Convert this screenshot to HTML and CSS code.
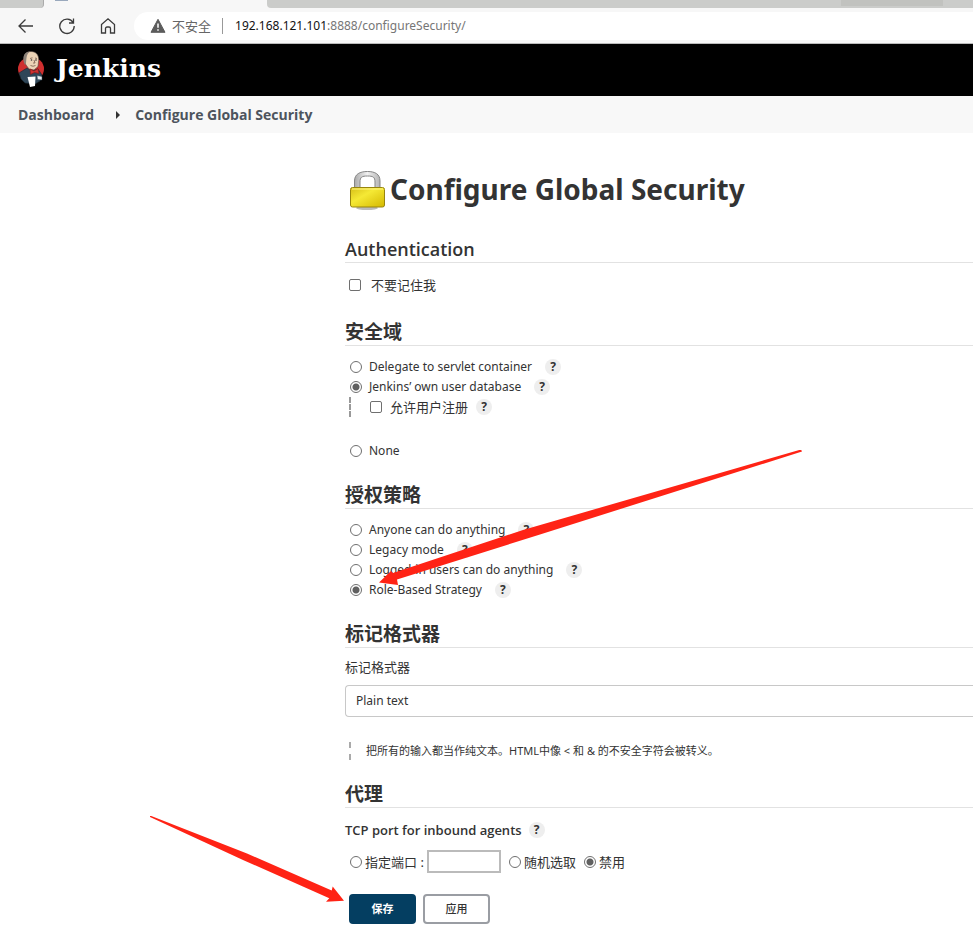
FILE: index.html
```
<!DOCTYPE html>
<html lang="zh-CN">
<head>
<meta charset="utf-8">
<title>Configure Global Security [Jenkins]</title>
<link rel="stylesheet" href="styles.css">
</head>
<body>
<div class="tabstrip"><div class="tab-left"></div><div class="tab-active"><span class="favicon"></span></div><div class="tab-rest"><span class="tab-shade"></span></div></div>
<div class="toolbar">
  <button class="nav-btn" type="button" aria-label="Back"><svg width="18" height="18" viewBox="0 0 18 18"><path d="M16 9H2M8.500 2.500L2 9l6.500 6.500"/></svg></button>
  <button class="nav-btn" type="button" aria-label="Refresh"><svg width="18" height="18" viewBox="0 0 18 18"><path d="M15.200 5.600A7.200 7.200 0 1 0 16.200 9M15.500 1.500v4.500H11"/></svg></button>
  <button class="nav-btn" type="button" aria-label="Home"><svg width="18" height="18" viewBox="0 0 18 18"><path d="M2.500 7.500L9 1.800l6.500 5.700V16h-4v-4.500a1.500 1.500 0 0 0-1.500-1.500H8a1.500 1.500 0 0 0-1.500 1.500V16h-4z"/></svg></button>
  <div class="address">
    <svg width="16" height="16" viewBox="0 0 16 16"><path d="M8 1.300L15 14.300H1z" fill="#5c5c5c" stroke="#5c5c5c" stroke-linejoin="round"/><path d="M8 5.500v4.300M8 11.300v1.500" stroke="#fff" stroke-width="1.500"/></svg>
    <span class="insecure">不安全</span>
    <span class="url"><b>192.168.121.101</b>:8888/configureSecurity/</span>
  </div>
</div>
<header class="masthead">
  <a class="brand" href="#">
    <svg width="28" height="38" viewBox="0 0 28 38">
      <ellipse cx="14" cy="19" rx="13" ry="12" fill="#cf2f2f"/>
      <path d="M2 23l8-5 5 3 6-2 4 6-2 6-5 3-10-1-4-4z" fill="#2f4658" stroke="#17262f" stroke-width=".6"/>
      <path d="M7.500 12C6 5 9 1.500 14 1.500c5.500 0 8 4 7.700 9l-.7 6-4 3.500-5-1-3-4z" fill="#ecd3b6" stroke="#4b403a" stroke-width=".6"/>
      <path d="M7 12.500C5 6 8 1.500 13 1.500 9.500 4 9.500 7 9 13l-1 2z" fill="#8b8178"/>
      <path d="M13 8.500l2.500-.7M18 8l2 .5M13.500 15.500q2.500 1.500 5 0M17 10l1 3h-2" fill="none" stroke="#77594a" stroke-width=".8"/>
      <circle cx="14.500" cy="10" r=".8" fill="#333"/><circle cx="19" cy="10" r=".8" fill="#333"/>
      <path d="M13 19l4 2 4-2.500 1 5-4.500-1-4 2z" fill="#cf2f2f" stroke="#7d1717" stroke-width=".6"/>
      <path d="M10.500 27l8-.5L18 36l-5 1z" fill="#fff"/>
      <path d="M20 25.500l5 1V30l-4.500-.5z" fill="#e6ebee" stroke="#2f4658" stroke-width=".5"/>
    </svg>
    <span class="brand-name">Jenkins</span>
  </a>
</header>
<nav class="crumbs"><a href="#">Dashboard</a><svg width="4" height="8" viewBox="0 0 4 8"><path d="M0 0l4 4-4 4z" fill="#333"/></svg><a href="#">Configure Global Security</a></nav>
<div class="page">
  <main>
    <h1 class="title">
      <svg width="38" height="42" viewBox="0 0 38 42">
        <defs>
          <linearGradient id="gold" x1="0" y1="0" x2="1" y2="1"><stop offset="0" stop-color="#d6be18"/><stop offset=".4" stop-color="#f5e935"/><stop offset="1" stop-color="#d4b800"/></linearGradient>
          <linearGradient id="steel"><stop offset="0" stop-color="#aaa"/><stop offset=".5" stop-color="#f1f1f1"/><stop offset="1" stop-color="#b4b4b4"/></linearGradient>
        </defs>
        <ellipse cx="19" cy="40" rx="11" ry="2" fill="#bbb"/>
        <path d="M6.500 20v-7C6.500 6 12 3.500 19.500 3.500S32 6 32 13v7h-5v-6c0-5-2-6-7.500-6S12 9 12 14v6z" fill="url(#steel)" stroke="#858585"/>
        <rect x="2.500" y="19.500" width="34" height="19.500" rx="2" fill="url(#gold)" stroke="#98850e"/>
        <path d="M4 21h31" stroke="#fff68a"/>
      </svg>
      <span>Configure Global Security</span>
    </h1>
    <form>
      <section>
        <h2 class="latin">Authentication</h2>
        <div class="row tall"><input type="checkbox" id="forget"><label for="forget">不要记住我</label></div>
      </section>
      <section>
        <h2>安全域</h2>
        <div class="row"><input type="radio" name="realm" id="r1"><label for="r1">Delegate to servlet container</label><button class="help" type="button">?</button></div>
        <div class="row"><input type="radio" name="realm" id="r2" checked><label for="r2">Jenkins’ own user database</label><button class="help" type="button">?</button></div>
        <div class="row nested"><input type="checkbox" id="signup"><label for="signup">允许用户注册</label><button class="help" type="button">?</button></div>
        <div class="row"><input type="radio" name="realm" id="r3"><label for="r3">None</label></div>
      </section>
      <section>
        <h2>授权策略</h2>
        <div class="row"><input type="radio" name="auth" id="a1"><label for="a1">Anyone can do anything</label><button class="help" type="button">?</button></div>
        <div class="row"><input type="radio" name="auth" id="a2"><label for="a2">Legacy mode</label><button class="help" type="button">?</button></div>
        <div class="row"><input type="radio" name="auth" id="a3"><label for="a3">Logged-in users can do anything</label><button class="help" type="button">?</button></div>
        <div class="row"><input type="radio" name="auth" id="a4" checked><label for="a4">Role-Based Strategy</label><button class="help" type="button">?</button></div>
      </section>
      <section>
        <h2>标记格式器</h2>
        <label class="field-label" for="markup">标记格式器</label>
        <select id="markup"><option>Plain text</option></select>
        <p class="note">把所有的输入都当作纯文本。HTML中像 &lt; 和 &amp; 的不安全字符会被转义。</p>
      </section>
      <section>
        <h2>代理</h2>
        <div class="port-title"><span>TCP port for inbound agents</span><button class="help" type="button">?</button></div>
        <div class="ports">
          <input type="radio" name="port" id="p1"><label for="p1">指定端口 :</label><input class="port" type="text" aria-label="端口">
          <input type="radio" name="port" id="p2"><label for="p2">随机选取</label>
          <input type="radio" name="port" id="p3" checked><label for="p3">禁用</label>
        </div>
      </section>
      <div class="actions"><button class="btn primary" type="submit">保存</button><button class="btn" type="button">应用</button></div>
    </form>
  </main>
  <svg class="arrow arrow-role" width="424" height="138" viewBox="0 0 424 138"><path d="M422-.5l1 2L161 84.500 18 129.500l1 5.500-19-2.500L12 121l2 2L144 80z"/></svg>
  <svg class="arrow arrow-save" width="196" height="88" viewBox="0 0 196 88"><path d="M0-.5L97 37.500l84.700 37 1-4L194 84.700l-18 1 3.300-3.500L93 44 0 1z"/></svg>
</div>
</body>
</html>
```
FILE: styles.css
```
* { box-sizing: border-box; }
body {
  margin: 0;
  background: #fff;
  color: #333;
  font: 13px/20px "Noto Sans", "Noto Sans CJK SC", sans-serif;
  overflow-x: hidden;
}
button, input, select { font: inherit; color: inherit; margin: 0; }
a { color: inherit; text-decoration: none; }
svg { flex: none; }

.tabstrip { display: flex; height: 8px; background: #f7f7f7; }
.tab-left { width: 44px; background: #cbccca; border-right: 1px solid #aaa; border-bottom-right-radius: 4px; }
.tab-active { width: 223px; padding-left: 11px; }
.favicon { display: block; width: 13px; height: 1px; background: #9aa9bd; }
.tab-rest { flex: 1; background: #cbccca; border-bottom-left-radius: 4px; display: flex; justify-content: flex-end; padding-right: 30px; }
.tab-shade { width: 102px; height: 6px; background: #c1c2bf; }

.toolbar { display: flex; align-items: center; height: 36px; padding-left: 17px; background: #f7f7f7; border-bottom: 1px solid #bbb; }
.nav-btn { display: flex; width: 18px; height: 18px; padding: 0; margin-right: 23px; border: 0; background: none; }
.nav-btn svg { fill: none; stroke: #3b3b3b; stroke-width: 1.3; }
.nav-btn:nth-child(3) { margin-right: 17px; }
.address { flex: 1; display: flex; align-items: center; height: 28px; padding-left: 16px; border-radius: 14px 0 0 14px; background: #fff; }
.insecure { margin-left: 6px; padding-right: 11px; border-right: 1px solid #999; color: #666; line-height: 16px; }
.url { margin-left: 12px; color: #767676; font-size: 12px; }
.url b { color: #111; font-weight: 400; }

.masthead { height: 52px; background: #000; color: #fff; padding: 6px 17px; }
.brand { display: inline-flex; align-items: center; gap: 11px; }
.brand-name { font: bold 25px/36px "DejaVu Serif", Georgia, serif; }
.crumbs { display: flex; align-items: center; height: 37px; padding-left: 18px; background: #f8f8f8; color: #4d545d; font: 700 14px/20px "Open Sans", sans-serif; }
.crumbs svg { margin: 0 15px 0 22px; }

.page { position: relative; display: grid; grid-template-columns: 345px 1fr; }
main { grid-column: 2; padding-top: 35px; }
.title { display: flex; align-items: center; gap: 4px; height: 42px; margin: 0 0 26px; padding-left: 3px; font-size: 28px; line-height: 40px; font-weight: 700; }
section { margin-bottom: 21px; }
h2 { margin: 0 0 11px; height: 27px; border-bottom: 1px solid #e2e2e2; font-size: 19px; line-height: 26px; font-weight: 700; }
h2.latin { font: 600 18px/26px "Open Sans", sans-serif; }

input[type="radio"], input[type="checkbox"] {
  appearance: none;
  flex: none;
  width: 12px;
  height: 12px;
  border: 1px solid #6f6f6f;
  background: #fff;
}
input[type="radio"] { border-radius: 50%; }
input[type="checkbox"] { border-radius: 2px; }
input[type="radio"]:checked { background: radial-gradient(circle, #606060 3px, #fff 4px); }

.row { display: flex; align-items: center; height: 20px; padding-left: 5px; gap: 7px; font-size: 12px; }
.row.tall { height: 24px; padding: 0 0 3px 4px; gap: 10px; font-size: 13px; }
.row.nested { margin: 0 0 24px 4px; padding-left: 19px; gap: 8px; border-left: 2px dashed #999; font-size: 13px; }
.help { width: 16px; height: 16px; padding: 0; border: 0; border-radius: 50%; background: #eee; font-size: 12px; line-height: 16px; font-weight: 700; }
.row .help { margin-left: 6px; }
.row.nested .help { margin-left: 0; }

.field-label { display: block; line-height: 16px; margin-bottom: 10px; }
select { appearance: none; display: block; width: 100%; height: 32px; padding: 0 10px; border: 1px solid #c8c8c8; border-right: 0; border-radius: 4px 0 0 4px; background: #fff; font-size: 12px; }
.note { margin: 25px 0 0 4px; padding-left: 15px; border-left: 2px dashed #aaa; font-size: 11px; line-height: 18px; }
.port-title { display: flex; align-items: center; gap: 7px; height: 22px; margin-bottom: 9px; font: 600 13px/20px "Open Sans", sans-serif; }
.ports { display: flex; align-items: center; gap: 3px; height: 23px; padding-left: 5px; }
.port { width: 74px; height: 23px; border: 2px solid #bbb; background: #fff; }
.ports .port { margin-right: 5px; }
#p3 { margin-left: 5px; }
.actions { display: flex; gap: 7px; padding: 0 0 8px 4px; }
.btn { width: 67px; height: 30px; padding: 0; border: 2px solid #9a9da3; border-radius: 4px; background: #fff; font-size: 11px; font-weight: 500; }
.primary { border-color: #043e61; background: #043e61; color: #fff; font-weight: 700; }

.arrow { position: absolute; fill: #ff2315; pointer-events: none; }
.arrow-role { left: 379px; top: 317px; }
.arrow-save { left: 150px; top: 683px; }
```
